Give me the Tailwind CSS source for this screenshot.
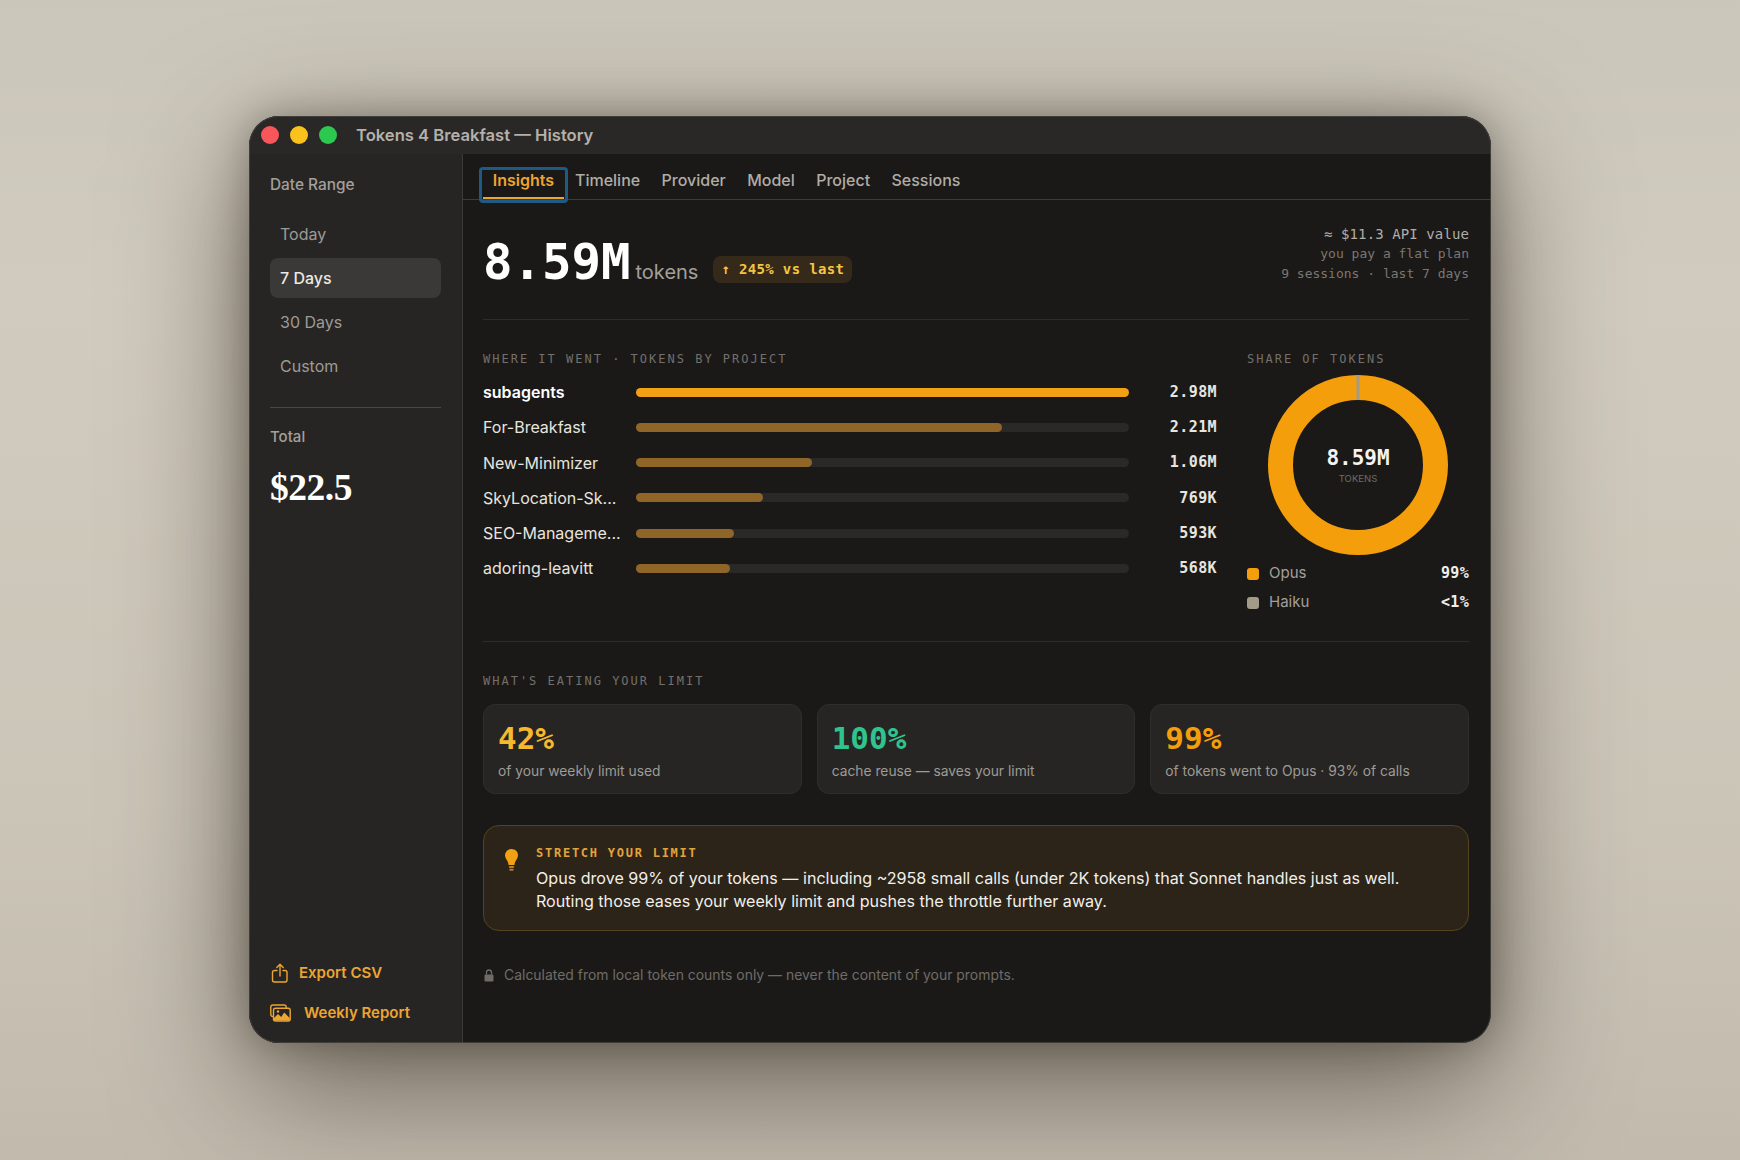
<!doctype html>
<html><head><meta charset="utf-8"><script src="https://cdn.jsdelivr.net/npm/@tailwindcss/browser@4"></script></head>
<body class="m-0">
<div class="w-[1740px] h-[1160px] overflow-hidden bg-[linear-gradient(180deg,#cbc6ba_0%,#d1cbbf_25%,#cbc5b8_70%,#c1baad_100%)] flex items-start justify-center pt-[116px] font-['Inter',sans-serif]">
<div class="relative w-[1242px] h-[927px] rounded-[30px] overflow-hidden flex flex-col bg-[#1a1918] shadow-[0_40px_130px_rgba(40,32,22,0.6),0_0_40px_rgba(40,32,22,0.35)]">
  <div class="absolute inset-0 rounded-[30px] border border-[#4a4845]/70 pointer-events-none"></div>
  <!-- title bar -->
  <div class="h-[38px] shrink-0 bg-[#2a2827] flex items-center pl-[12px]">
    <span class="w-[18px] h-[18px] rounded-full bg-[#f9565c]"></span>
    <span class="w-[18px] h-[18px] rounded-full bg-[#fcc21c] ml-[11px]"></span>
    <span class="w-[18px] h-[18px] rounded-full bg-[#2dc84f] ml-[11px]"></span>
    <span class="ml-[19px] text-[16.600px] font-semibold text-[#b5b1aa]">Tokens 4 Breakfast — History</span>
  </div>
  <div class="flex flex-1 min-h-0">
    <!-- sidebar -->
    <aside class="w-[214px] shrink-0 bg-[#272524] border-r border-[#3d3b38] flex flex-col px-[21px] pt-[21px] pb-[20px]">
      <div class="text-[15.400px] font-medium text-[#a3a09a] leading-[20px]">Date Range</div>
      <nav class="mt-[19px] flex flex-col gap-[4px] text-[16px] text-[#9e9b95]">
        <div class="h-[40px] flex items-center px-[10px]">Today</div>
        <div class="h-[40px] flex items-center px-[10px] rounded-[8px] bg-[#3b3937] text-[#ece9e4] font-medium">7 Days</div>
        <div class="h-[40px] flex items-center px-[10px]">30 Days</div>
        <div class="h-[40px] flex items-center px-[10px]">Custom</div>
      </nav>
      <div class="mt-[21px] h-px bg-[#4a4845]"></div>
      <div class="mt-[19px] text-[15px] font-medium text-[#a3a09a] leading-[20px]">Total</div>
      <div class="mt-[19px] text-[37.500px] font-bold text-white leading-[44px] font-['Liberation_Serif',serif] tracking-[-0.5px]">$22.5</div>
      <div class="mt-auto flex items-center gap-[10px] text-[15px] font-semibold text-[#eda531] leading-[20px]">
        <svg class="w-[18px] h-[20px] ml-[1px]" viewBox="0 0 18 20" fill="none" stroke="#eda531" stroke-width="1.4" stroke-linecap="round" stroke-linejoin="round"><path d="M6 7.500H3.500a2 2 0 0 0-2 2v7.500a2 2 0 0 0 2 2h10.500a2 2 0 0 0 2-2V9.500a2 2 0 0 0-2-2H12"/><path d="M9 13V1.500M5.800 4.500 9 1.300l3.200 3.200"/></svg>
        <span>Export CSV</span>
      </div>
      <div class="mt-[20px] flex items-center gap-[13px] text-[15px] font-semibold text-[#eda531] leading-[20px]">
        <svg class="w-[21px] h-[18px]" viewBox="0 0 21 18" fill="none" stroke="#eda531" stroke-width="1.4" stroke-linejoin="round"><path d="M3.500 12.500H2.800A2 2 0 0 1 .8 10.500V3A2 2 0 0 1 2.800 1h11.400a2 2 0 0 1 2 2v1"/><rect x="3.500" y="4.200" width="16.700" height="12.800" rx="2"/><path d="M4 16.500v-2.500l4-4 3.200 3 3-4.500 5.500 5.500v2.500z" fill="#eda531" stroke="none"/><circle cx="8" cy="7.500" r="1.200" fill="#eda531" stroke="none"/></svg>
        <span>Weekly Report</span>
      </div>
    </aside>
    <!-- main -->
    <main class="flex-1 min-w-0 flex flex-col">
      <div class="h-[46px] shrink-0 border-b border-[#3f3c36] flex items-stretch pl-[16px] gap-[1px] text-[16px] font-medium text-[#b0ada6]">
        <div class="relative w-[89px] h-[36px] mt-[13px] border-[3px] border-[#1f5a85] rounded-[4px] flex items-start justify-center text-[#eda531] font-semibold leading-[20px]">Insights<span class="absolute left-[1px] right-[1px] bottom-[1px] h-[2px] bg-[#eda531]"></span></div>
        <div class="flex gap-[21.400px] pl-[6px] pt-[16px] leading-[20px]"><span>Timeline</span><span>Provider</span><span>Model</span><span>Project</span><span>Sessions</span></div>
      </div>
      <div class="flex-1 min-h-0 pl-[20px] pr-[22px] flex flex-col">
        <!-- hero -->
        <div class="h-[120px] shrink-0 border-b border-[#2e2c2a] flex justify-between">
          <div class="flex items-start">
            <span class="mt-[35px] font-['DejaVu_Sans_Mono',monospace] font-bold text-[49px] leading-[56px] text-white">8.59M</span>
            <span class="ml-[5px] mt-[60px] text-[20px] leading-[24px] text-[#a3a09a]">tokens</span>
            <span class="ml-[15px] mt-[56px] h-[27px] px-[8px] rounded-[8px] bg-[#35291a] flex items-center font-['DejaVu_Sans_Mono',monospace] font-bold text-[14px] tracking-[0.35px] text-[#f5c542] whitespace-nowrap">↑ 245% vs last</span>
          </div>
          <div class="text-right font-['DejaVu_Sans_Mono',monospace] text-[13px] leading-[20px] text-[#7a7772] pt-[24px]">
            <div class="text-[14px] tracking-[0.1px] text-[#b0ada6]">≈ $11.3 API value</div><div>you pay a flat plan</div><div>9 sessions · last 7 days</div>
          </div>
        </div>
        <!-- breakdown -->
        <div class="h-[322px] shrink-0 border-b border-[#2e2c2a] flex pt-[31px]">
          <div class="w-[734px] shrink-0">
            <div class="font-['DejaVu_Sans_Mono',monospace] text-[12px] tracking-[2px] leading-[16px] text-[#73706b]">WHERE IT WENT · TOKENS BY PROJECT</div>
            <div class="mt-[11px] flex flex-col gap-[7.300px]">
              <div class="h-[28px] flex items-center"><span class="w-[153px] text-[16px] font-semibold text-white">subagents</span><span class="w-[493px] h-[9px] rounded-full bg-[#f2a114]"></span><span class="w-[88px] text-right font-['DejaVu_Sans_Mono',monospace] font-bold text-[15px] tracking-[0.4px] text-[#e8e5df]">2.98M</span></div>
              <div class="h-[28px] flex items-center"><span class="w-[153px] text-[16px] text-[#e8e5df]">For-Breakfast</span><span class="w-[493px] h-[9px] rounded-full bg-[#2b2927]"><span class="block h-full w-[74.300%] rounded-full bg-[#8f6628]"></span></span><span class="w-[88px] text-right font-['DejaVu_Sans_Mono',monospace] font-bold text-[15px] tracking-[0.4px] text-[#e8e5df]">2.21M</span></div>
              <div class="h-[28px] flex items-center"><span class="w-[153px] text-[16px] text-[#e8e5df]">New-Minimizer</span><span class="w-[493px] h-[9px] rounded-full bg-[#2b2927]"><span class="block h-full w-[35.600%] rounded-full bg-[#8f6628]"></span></span><span class="w-[88px] text-right font-['DejaVu_Sans_Mono',monospace] font-bold text-[15px] tracking-[0.4px] text-[#e8e5df]">1.06M</span></div>
              <div class="h-[28px] flex items-center"><span class="w-[153px] text-[16px] text-[#e8e5df]">SkyLocation-Sk...</span><span class="w-[493px] h-[9px] rounded-full bg-[#2b2927]"><span class="block h-full w-[25.800%] rounded-full bg-[#8f6628]"></span></span><span class="w-[88px] text-right font-['DejaVu_Sans_Mono',monospace] font-bold text-[15px] tracking-[0.4px] text-[#e8e5df]">769K</span></div>
              <div class="h-[28px] flex items-center"><span class="w-[153px] text-[16px] text-[#e8e5df] whitespace-nowrap">SEO-Manageme...</span><span class="w-[493px] h-[9px] rounded-full bg-[#2b2927]"><span class="block h-full w-[19.900%] rounded-full bg-[#8f6628]"></span></span><span class="w-[88px] text-right font-['DejaVu_Sans_Mono',monospace] font-bold text-[15px] tracking-[0.4px] text-[#e8e5df]">593K</span></div>
              <div class="h-[28px] flex items-center"><span class="w-[153px] text-[16px] text-[#e8e5df]">adoring-leavitt</span><span class="w-[493px] h-[9px] rounded-full bg-[#2b2927]"><span class="block h-full w-[19%] rounded-full bg-[#8f6628]"></span></span><span class="w-[88px] text-right font-['DejaVu_Sans_Mono',monospace] font-bold text-[15px] tracking-[0.4px] text-[#e8e5df]">568K</span></div>
            </div>
          </div>
          <div class="flex-1 pl-[30px]">
            <div class="font-['DejaVu_Sans_Mono',monospace] text-[12px] tracking-[2px] leading-[16px] text-[#73706b] whitespace-nowrap">SHARE OF TOKENS</div>
            <div class="relative w-[182px] h-[182px] ml-[20px] mt-[7px]">
              <svg viewBox="0 0 182 182" class="w-[182px] h-[182px]"><circle cx="91" cy="91" r="77.500" fill="none" stroke="#f59e0b" stroke-width="25"/><rect x="89.500" y="1" width="3" height="25" fill="#a39a88"/></svg>
              <div class="absolute inset-0 flex flex-col items-center justify-center">
                <span class="font-['DejaVu_Sans_Mono',monospace] font-bold text-[21px] leading-[24px] text-[#f5f3ef]">8.59M</span>
                <span class="text-[9.500px] leading-[13px] text-[#6f6c67] mt-[2px]">TOKENS</span>
              </div>
            </div>
            <div class="mt-[3px] h-[29px] flex items-center text-[15px] text-[#a3a09a]"><span class="w-[12px] h-[12px] rounded-[3px] bg-[#f59e0b]"></span><span class="ml-[10px]">Opus</span><span class="ml-auto font-['DejaVu_Sans_Mono',monospace] font-bold text-[15px] tracking-[0.3px] text-[#f0eee9]">99%</span></div>
            <div class="h-[29px] flex items-center text-[15px] text-[#a3a09a]"><span class="w-[12px] h-[12px] rounded-[3px] bg-[#a39a88]"></span><span class="ml-[10px]">Haiku</span><span class="ml-auto font-['DejaVu_Sans_Mono',monospace] font-bold text-[15px] tracking-[0.3px] text-[#f0eee9]">&lt;1%</span></div>
          </div>
        </div>
        <!-- limit -->
        <div class="pt-[31px] font-['DejaVu_Sans_Mono',monospace] text-[12px] tracking-[2px] leading-[16px] text-[#73706b]">WHAT'S EATING YOUR LIMIT</div>
        <div class="mt-[15px] grid grid-cols-3 gap-[15px]">
          <div class="h-[90px] rounded-[12px] bg-[#272524] border border-[#302e2c] px-[14px] pt-[16px]"><div class="font-['DejaVu_Sans_Mono',monospace] font-bold text-[31px] leading-[34px] text-[#f5b82e]">42%</div><div class="mt-[6px] text-[13.800px] leading-[20px] text-[#9e9b95]">of your weekly limit used</div></div>
          <div class="h-[90px] rounded-[12px] bg-[#272524] border border-[#302e2c] px-[14px] pt-[16px]"><div class="font-['DejaVu_Sans_Mono',monospace] font-bold text-[31px] leading-[34px] text-[#2fc48d]">100%</div><div class="mt-[6px] text-[13.800px] leading-[20px] text-[#9e9b95]">cache reuse — saves your limit</div></div>
          <div class="h-[90px] rounded-[12px] bg-[#272524] border border-[#302e2c] px-[14px] pt-[16px]"><div class="font-['DejaVu_Sans_Mono',monospace] font-bold text-[31px] leading-[34px] text-[#f59e0b]">99%</div><div class="mt-[6px] text-[13.800px] leading-[20px] text-[#9e9b95]">of tokens went to Opus · 93% of calls</div></div>
        </div>
        <!-- callout -->
        <div class="mt-[31px] h-[106px] rounded-[16px] bg-[#2c2319] border border-[#55421f] flex pl-[20px] pt-[19px]">
          <svg class="w-[15px] h-[24px] mt-[3px] shrink-0" viewBox="0 0 15 24"><path d="M7.500 1C3.600 1 1 3.800 1 7.200c0 3 2 4.400 3 7.300.3.900.5 1.700.6 2.500h5.800c.1-.8.3-1.600.6-2.500 1-2.900 3-4.300 3-7.300C14 3.800 11.400 1 7.500 1z" fill="#f2a114"/><rect x="4.800" y="18" width="5.400" height="2" rx="1" fill="#b57f22"/><rect x="5.300" y="20.800" width="4.400" height="2" rx="1" fill="#b57f22"/></svg>
          <div class="ml-[17px]">
            <div class="font-['DejaVu_Sans_Mono',monospace] font-bold text-[12px] tracking-[1.75px] leading-[16px] text-[#e3a33c]">STRETCH YOUR LIMIT</div>
            <div class="mt-[6px] text-[16.100px] leading-[23px] text-[#f2efe9]">Opus drove 99% of your tokens — including ~2958 small calls (under 2K tokens) that Sonnet handles just as well.<br>Routing those eases your weekly limit and pushes the throttle further away.</div>
          </div>
        </div>
        <div class="mt-[34px] flex items-center text-[13.950px] leading-[20px] text-[#6f6c67]">
          <svg class="w-[10px] h-[13px] ml-[1px]" viewBox="0 0 10 13"><path d="M2.500 5.500V3.500a2.500 2.500 0 0 1 5 0v2" fill="none" stroke="#6f6c67" stroke-width="1.300"/><rect x="0.500" y="5.500" width="9" height="7" rx="1.200" fill="#6f6c67"/></svg>
          <span class="ml-[10px]">Calculated from local token counts only — never the content of your prompts.</span>
        </div>
      </div>
    </main>
  </div>
</div>
</div>
</body></html>
